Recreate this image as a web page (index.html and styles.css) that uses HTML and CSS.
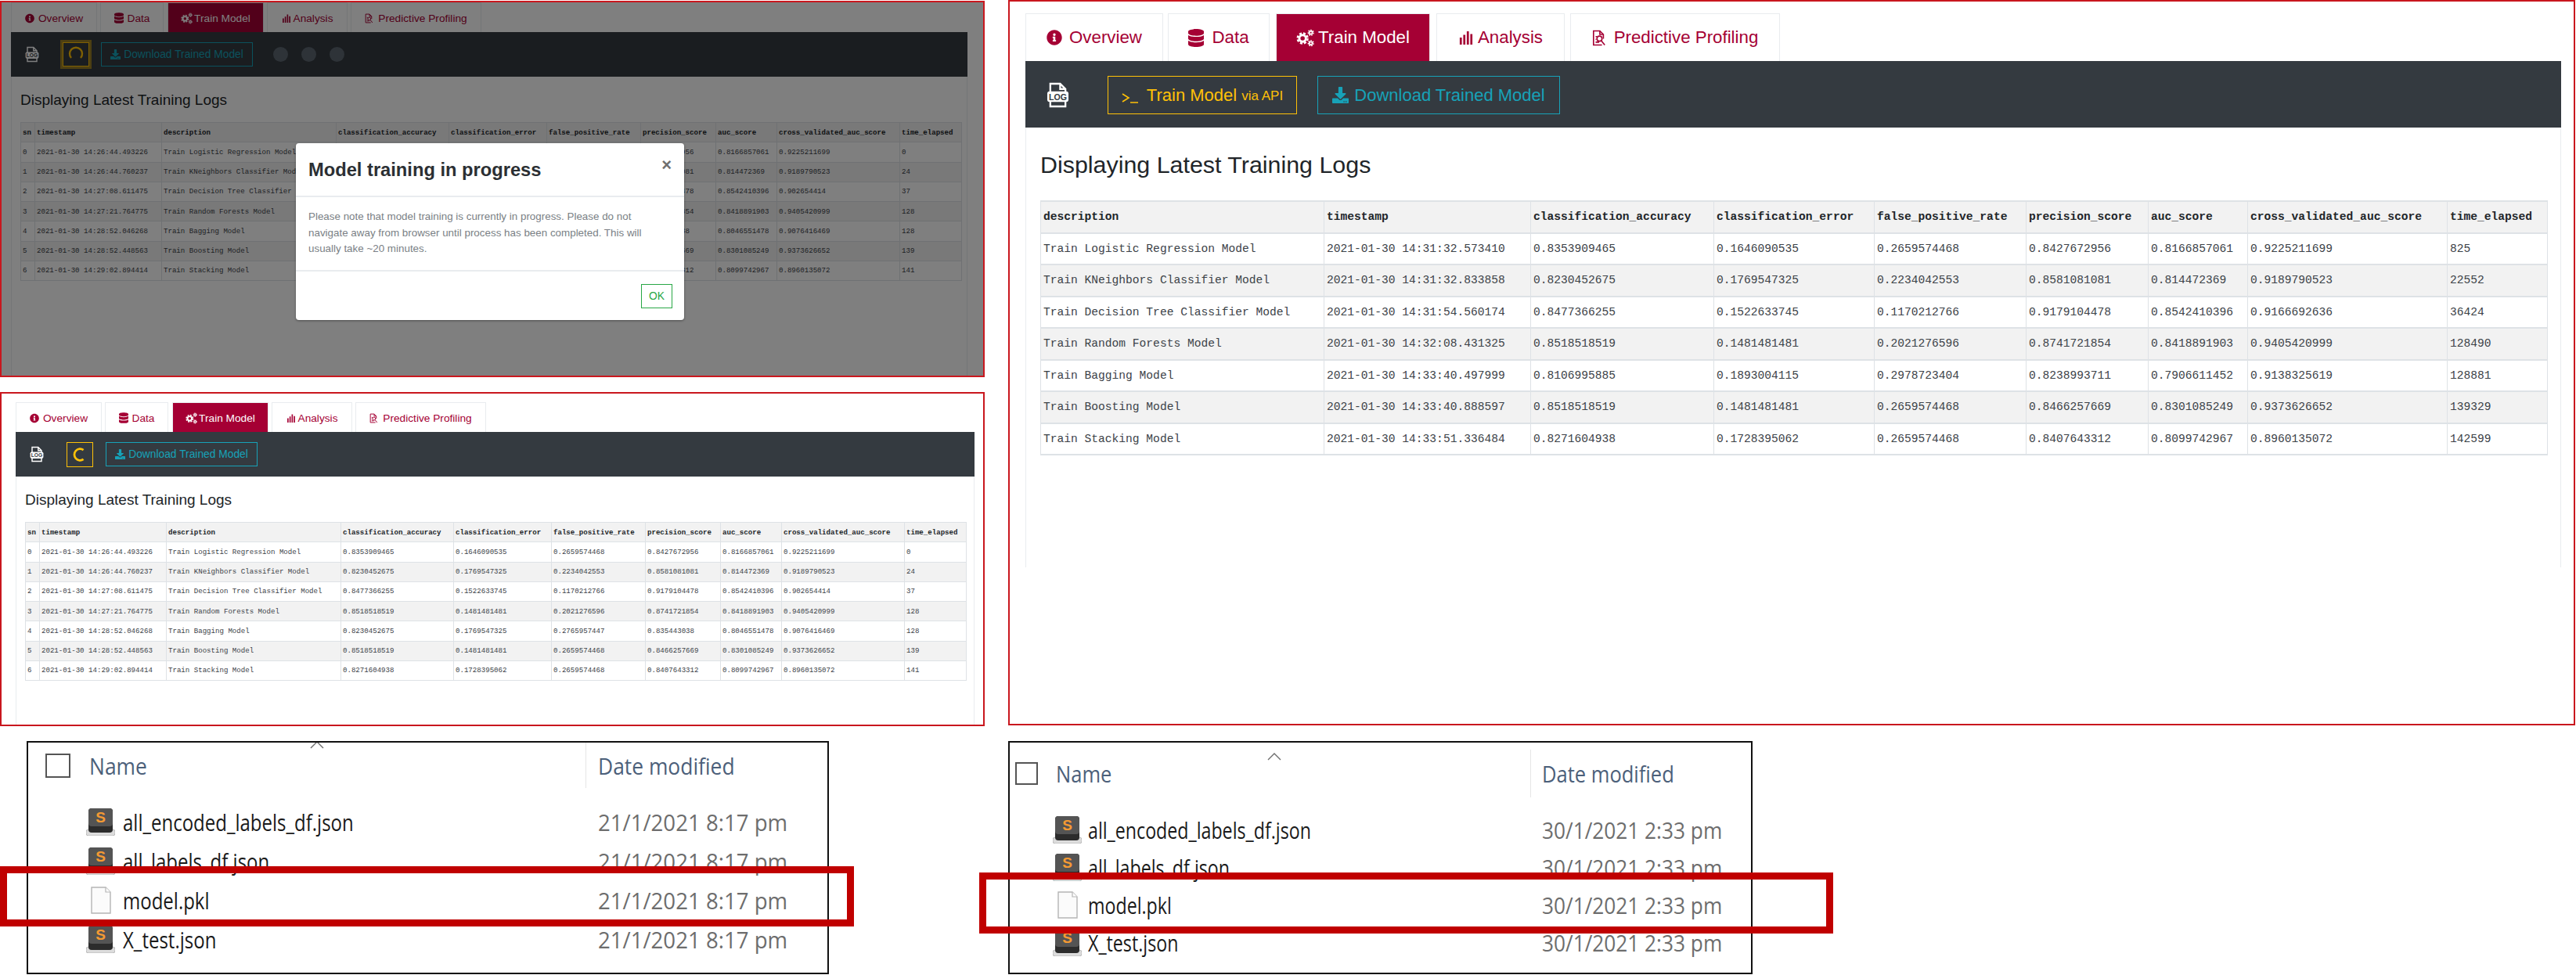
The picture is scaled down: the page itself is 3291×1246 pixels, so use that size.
FILE: index.html
```html
<!DOCTYPE html>
<html lang="en">
<head>
<meta charset="utf-8">
<title>Train Model comparison</title>
<link rel="stylesheet" href="styles.css">
</head>
<body>
<svg class="defs" aria-hidden="true">
  <symbol id="i-info" viewBox="0 0 512 512"><path d="M256 8C119.043 8 8 119.083 8 256c0 136.997 111.043 248 248 248s248-111.003 248-248C504 119.083 392.957 8 256 8zm0 110c23.196 0 42 18.804 42 42s-18.804 42-42 42-42-18.804-42-42 18.804-42 42-42zm56 254c0 6.627-5.373 12-12 12h-88c-6.627 0-12-5.373-12-12v-24c0-6.627 5.373-12 12-12h12v-64h-12c-6.627 0-12-5.373-12-12v-24c0-6.627 5.373-12 12-12h64c6.627 0 12 5.373 12 12v100h12c6.627 0 12 5.373 12 12v24z"/></symbol>
  <symbol id="i-db" viewBox="0 0 448 512"><path d="M448 73.143v45.714C448 159.143 347.667 192 224 192S0 159.143 0 118.857V73.143C0 32.857 100.333 0 224 0s224 32.857 224 73.143zM448 176v102.857C448 319.143 347.667 352 224 352S0 319.143 0 278.857V176c48.125 33.143 136.208 48.572 224 48.572S399.874 209.143 448 176zm0 160v102.857C448 479.143 347.667 512 224 512S0 479.143 0 438.857V336c48.125 33.143 136.208 48.572 224 48.572S399.874 369.143 448 336z"/></symbol>
  <symbol id="i-cogs" viewBox="0 0 24 24"><g fill="none" stroke="currentColor"><circle cx="8.5" cy="12.5" r="4.4" stroke-width="3"/><circle cx="8.5" cy="12.5" r="6.8" stroke-width="2.4" stroke-dasharray="3.2 2.15"/><circle cx="19.5" cy="5" r="2" stroke-width="1.8"/><circle cx="19.5" cy="5" r="3.5" stroke-width="1.5" stroke-dasharray="1.8 1.3"/><circle cx="19.5" cy="19" r="2" stroke-width="1.8"/><circle cx="19.5" cy="19" r="3.5" stroke-width="1.5" stroke-dasharray="1.8 1.3"/></g></symbol>
  <symbol id="i-bars" viewBox="0 0 20 20"><path d="M1 10h3v10H1zM6 6h3v14H6zM11 1h3v19h-3zM16 5h3v15h-3z"/></symbol>
  <symbol id="i-filesearch" viewBox="0 0 20 24"><g fill="none" stroke="currentColor" stroke-width="1.8"><path d="M14 22H2V2h9l5 5v6"/><path d="M11 2v5h5"/><circle cx="10.5" cy="13" r="3.6"/><path d="M13 16l5 6M5 10h2M5 14h1M5 18h5"/></g></symbol>
  <symbol id="i-download" viewBox="0 0 512 512"><path d="M216 0h80c13.3 0 24 10.7 24 24v168h87.7c17.8 0 26.7 21.5 14.1 34.1L269.7 378.3c-7.5 7.5-19.8 7.5-27.3 0L90.1 226.1c-12.6-12.6-3.7-34.1 14.1-34.1H192V24c0-13.3 10.7-24 24-24zm296 376v112c0 13.3-10.7 24-24 24H24c-13.3 0-24-10.7-24-24V376c0-13.3 10.7-24 24-24h146.7l49 49c20.1 20.1 52.5 20.1 72.6 0l49-49H488c13.3 0 24 10.7 24 24zm-124 88c0-11-9-20-20-20s-20 9-20 20 9 20 20 20 20-9 20-20zm64 0c0-11-9-20-20-20s-20 9-20 20 9 20 20 20 20-9 20-20z"/></symbol>
  <symbol id="i-log" viewBox="0 0 30 34"><path d="M5 13V2h13l7 7v4M25 25v7H5v-7M18 2v7h7" fill="none" stroke="currentColor" stroke-width="2.4"/><rect x="1" y="12" width="28" height="14" rx="3" fill="currentColor"/><text x="15" y="23.5" text-anchor="middle" class="log-label">LOG</text></symbol>
  <symbol id="i-sublime" viewBox="0 0 37 35"><rect x="0" y="27" width="37" height="8" rx="3" fill="#dcdcdc" stroke="#b8b8b8"/><rect x="3" y="0" width="31" height="31" rx="4" fill="#2c2c2c"/><rect x="3" y="0" width="31" height="23" rx="4" fill="#545454"/><text x="18.5" y="18" text-anchor="middle" class="sublime-label">S</text></symbol>
  <symbol id="i-page" viewBox="0 0 26 35"><path d="M1 1h18l6 6v27H1z" fill="#fbfbfb" stroke="#b5b5b5" stroke-width="1.4"/><path d="M19 1v6h6" fill="#fff" stroke="#b5b5b5" stroke-width="1.2"/></symbol>
</svg>

<main class="canvas">

  <section class="panel panel--a">
    <div class="card">
      <nav class="tabs tabs--s">
        <a class="tab"><svg class="ic ic--info"><use href="#i-info"/></svg>Overview</a>
        <a class="tab"><svg class="ic ic--db"><use href="#i-db"/></svg>Data</a>
        <a class="tab tab--on"><svg class="ic ic--cogs"><use href="#i-cogs"/></svg>Train Model</a>
        <a class="tab"><svg class="ic ic--bars"><use href="#i-bars"/></svg>Analysis</a>
        <a class="tab"><svg class="ic ic--file"><use href="#i-filesearch"/></svg>Predictive Profiling</a>
      </nav>
      <div class="body">
        <div class="bar bar--a">
          <svg class="log log--s"><use href="#i-log"/></svg>
          <span class="btn-y btn-y--a"><svg class="arc" viewBox="0 0 24 24"><path d="M6 16A8 8 0 1 1 18 16" fill="none" stroke="currentColor" stroke-width="2.4"/></svg></span>
          <span class="btn-t btn-t--s"><svg class="ic-dl"><use href="#i-download"/></svg>Download Trained Model</span>
          <span class="dots"><i></i><i></i><i></i></span>
        </div>
        <h2 class="title title--s">Displaying Latest Training Logs</h2>
        <table class="grid grid--s">
          <colgroup><col><col><col><col><col><col><col><col><col><col></colgroup>
          <thead><tr><th>sn</th><th>timestamp</th><th>description</th><th>classification_accuracy</th><th>classification_error</th><th>false_positive_rate</th><th>precision_score</th><th>auc_score</th><th>cross_validated_auc_score</th><th>time_elapsed</th></tr></thead>
          <tbody>
            <tr><td>0</td><td>2021-01-30 14:26:44.493226</td><td>Train Logistic Regression Model</td><td>0.8353909465</td><td>0.1646090535</td><td>0.2659574468</td><td>0.8427672956</td><td>0.8166857061</td><td>0.9225211699</td><td>0</td></tr>
            <tr><td>1</td><td>2021-01-30 14:26:44.760237</td><td>Train KNeighbors Classifier Model</td><td>0.8230452675</td><td>0.1769547325</td><td>0.2234042553</td><td>0.8581081081</td><td>0.814472369</td><td>0.9189790523</td><td>24</td></tr>
            <tr><td>2</td><td>2021-01-30 14:27:08.611475</td><td>Train Decision Tree Classifier Model</td><td>0.8477366255</td><td>0.1522633745</td><td>0.1170212766</td><td>0.9179104478</td><td>0.8542410396</td><td>0.902654414</td><td>37</td></tr>
            <tr><td>3</td><td>2021-01-30 14:27:21.764775</td><td>Train Random Forests Model</td><td>0.8518518519</td><td>0.1481481481</td><td>0.2021276596</td><td>0.8741721854</td><td>0.8418891903</td><td>0.9405420999</td><td>128</td></tr>
            <tr><td>4</td><td>2021-01-30 14:28:52.046268</td><td>Train Bagging Model</td><td>0.8230452675</td><td>0.1769547325</td><td>0.2765957447</td><td>0.835443038</td><td>0.8046551478</td><td>0.9076416469</td><td>128</td></tr>
            <tr><td>5</td><td>2021-01-30 14:28:52.448563</td><td>Train Boosting Model</td><td>0.8518518519</td><td>0.1481481481</td><td>0.2659574468</td><td>0.8466257669</td><td>0.8301085249</td><td>0.9373626652</td><td>139</td></tr>
            <tr><td>6</td><td>2021-01-30 14:29:02.894414</td><td>Train Stacking Model</td><td>0.8271604938</td><td>0.1728395062</td><td>0.2659574468</td><td>0.8407643312</td><td>0.8099742967</td><td>0.8960135072</td><td>141</td></tr>
          </tbody>
        </table>
      </div>
    </div>
    <div class="scrim"></div>
    <div class="modal">
      <header class="modal-head"><h3>Model training in progress</h3><span class="modal-x">×</span></header>
      <p class="modal-body">Please note that model training is currently in progress. Please do not navigate away from browser until process has been completed. This will usually take ~20 minutes.</p>
      <footer class="modal-foot"><span class="btn-ok">OK</span></footer>
    </div>
  </section>

  <section class="panel panel--b">
    <div class="card">
      <nav class="tabs tabs--s">
        <a class="tab"><svg class="ic ic--info"><use href="#i-info"/></svg>Overview</a>
        <a class="tab"><svg class="ic ic--db"><use href="#i-db"/></svg>Data</a>
        <a class="tab tab--on"><svg class="ic ic--cogs"><use href="#i-cogs"/></svg>Train Model</a>
        <a class="tab"><svg class="ic ic--bars"><use href="#i-bars"/></svg>Analysis</a>
        <a class="tab"><svg class="ic ic--file"><use href="#i-filesearch"/></svg>Predictive Profiling</a>
      </nav>
      <div class="body">
        <div class="bar bar--b">
          <svg class="log log--s"><use href="#i-log"/></svg>
          <span class="btn-y btn-y--b"><svg class="arc" viewBox="0 0 24 24"><path d="M17 5.5A8 8 0 1 0 17 18.5" fill="none" stroke="currentColor" stroke-width="3"/></svg></span>
          <span class="btn-t btn-t--s"><svg class="ic-dl"><use href="#i-download"/></svg>Download Trained Model</span>
        </div>
        <h2 class="title title--s">Displaying Latest Training Logs</h2>
        <table class="grid grid--s">
          <colgroup><col><col><col><col><col><col><col><col><col><col></colgroup>
          <thead><tr><th>sn</th><th>timestamp</th><th>description</th><th>classification_accuracy</th><th>classification_error</th><th>false_positive_rate</th><th>precision_score</th><th>auc_score</th><th>cross_validated_auc_score</th><th>time_elapsed</th></tr></thead>
          <tbody>
            <tr><td>0</td><td>2021-01-30 14:26:44.493226</td><td>Train Logistic Regression Model</td><td>0.8353909465</td><td>0.1646090535</td><td>0.2659574468</td><td>0.8427672956</td><td>0.8166857061</td><td>0.9225211699</td><td>0</td></tr>
            <tr><td>1</td><td>2021-01-30 14:26:44.760237</td><td>Train KNeighbors Classifier Model</td><td>0.8230452675</td><td>0.1769547325</td><td>0.2234042553</td><td>0.8581081081</td><td>0.814472369</td><td>0.9189790523</td><td>24</td></tr>
            <tr><td>2</td><td>2021-01-30 14:27:08.611475</td><td>Train Decision Tree Classifier Model</td><td>0.8477366255</td><td>0.1522633745</td><td>0.1170212766</td><td>0.9179104478</td><td>0.8542410396</td><td>0.902654414</td><td>37</td></tr>
            <tr><td>3</td><td>2021-01-30 14:27:21.764775</td><td>Train Random Forests Model</td><td>0.8518518519</td><td>0.1481481481</td><td>0.2021276596</td><td>0.8741721854</td><td>0.8418891903</td><td>0.9405420999</td><td>128</td></tr>
            <tr><td>4</td><td>2021-01-30 14:28:52.046268</td><td>Train Bagging Model</td><td>0.8230452675</td><td>0.1769547325</td><td>0.2765957447</td><td>0.835443038</td><td>0.8046551478</td><td>0.9076416469</td><td>128</td></tr>
            <tr><td>5</td><td>2021-01-30 14:28:52.448563</td><td>Train Boosting Model</td><td>0.8518518519</td><td>0.1481481481</td><td>0.2659574468</td><td>0.8466257669</td><td>0.8301085249</td><td>0.9373626652</td><td>139</td></tr>
            <tr><td>6</td><td>2021-01-30 14:29:02.894414</td><td>Train Stacking Model</td><td>0.8271604938</td><td>0.1728395062</td><td>0.2659574468</td><td>0.8407643312</td><td>0.8099742967</td><td>0.8960135072</td><td>141</td></tr>
          </tbody>
        </table>
      </div>
    </div>
  </section>

  <section class="panel panel--c">
    <div class="card">
      <nav class="tabs tabs--l">
        <a class="tab"><svg class="ic ic--info"><use href="#i-info"/></svg>Overview</a>
        <a class="tab"><svg class="ic ic--db"><use href="#i-db"/></svg>Data</a>
        <a class="tab tab--on"><svg class="ic ic--cogs"><use href="#i-cogs"/></svg>Train Model</a>
        <a class="tab"><svg class="ic ic--bars"><use href="#i-bars"/></svg>Analysis</a>
        <a class="tab"><svg class="ic ic--file"><use href="#i-filesearch"/></svg>Predictive Profiling</a>
      </nav>
      <div class="body">
        <div class="bar bar--c">
          <svg class="log log--l"><use href="#i-log"/></svg>
          <span class="btn-y btn-y--c"><svg class="prompt" viewBox="0 0 22 14"><path d="M1 2l8 5-8 5M11 13h10" fill="none" stroke="currentColor" stroke-width="1.6"/></svg>Train Model <small>via API</small></span>
          <span class="btn-t btn-t--l"><svg class="ic-dl"><use href="#i-download"/></svg>Download Trained Model</span>
        </div>
        <h2 class="title title--l">Displaying Latest Training Logs</h2>
        <table class="grid grid--l">
          <colgroup><col><col><col><col><col><col><col><col><col></colgroup>
          <thead><tr><th>description</th><th>timestamp</th><th>classification_accuracy</th><th>classification_error</th><th>false_positive_rate</th><th>precision_score</th><th>auc_score</th><th>cross_validated_auc_score</th><th>time_elapsed</th></tr></thead>
          <tbody>
            <tr><td>Train Logistic Regression Model</td><td>2021-01-30 14:31:32.573410</td><td>0.8353909465</td><td>0.1646090535</td><td>0.2659574468</td><td>0.8427672956</td><td>0.8166857061</td><td>0.9225211699</td><td>825</td></tr>
            <tr><td>Train KNeighbors Classifier Model</td><td>2021-01-30 14:31:32.833858</td><td>0.8230452675</td><td>0.1769547325</td><td>0.2234042553</td><td>0.8581081081</td><td>0.814472369</td><td>0.9189790523</td><td>22552</td></tr>
            <tr><td>Train Decision Tree Classifier Model</td><td>2021-01-30 14:31:54.560174</td><td>0.8477366255</td><td>0.1522633745</td><td>0.1170212766</td><td>0.9179104478</td><td>0.8542410396</td><td>0.9166692636</td><td>36424</td></tr>
            <tr><td>Train Random Forests Model</td><td>2021-01-30 14:32:08.431325</td><td>0.8518518519</td><td>0.1481481481</td><td>0.2021276596</td><td>0.8741721854</td><td>0.8418891903</td><td>0.9405420999</td><td>128490</td></tr>
            <tr><td>Train Bagging Model</td><td>2021-01-30 14:33:40.497999</td><td>0.8106995885</td><td>0.1893004115</td><td>0.2978723404</td><td>0.8238993711</td><td>0.7906611452</td><td>0.9138325619</td><td>128881</td></tr>
            <tr><td>Train Boosting Model</td><td>2021-01-30 14:33:40.888597</td><td>0.8518518519</td><td>0.1481481481</td><td>0.2659574468</td><td>0.8466257669</td><td>0.8301085249</td><td>0.9373626652</td><td>139329</td></tr>
            <tr><td>Train Stacking Model</td><td>2021-01-30 14:33:51.336484</td><td>0.8271604938</td><td>0.1728395062</td><td>0.2659574468</td><td>0.8407643312</td><td>0.8099742967</td><td>0.8960135072</td><td>142599</td></tr>
          </tbody>
        </table>
      </div>
    </div>
  </section>

  <section class="explorer explorer--d">
    <svg class="caret" viewBox="0 0 18 10"><path d="M1 9l8-8 8 8" fill="none" stroke="#6d6d6d" stroke-width="1.4"/></svg>
    <header class="ex-head">
      <span class="ex-check"></span>
      <span class="ex-name"><span class="ex-label">Name</span></span>
      <span class="ex-date"><span class="ex-label">Date modified</span></span>
    </header>
    <div class="ex-row"><svg class="ex-icon"><use href="#i-sublime"/></svg><span class="ex-file"><span class="ex-narrow">all_encoded_labels_df.json</span></span><time class="ex-time">21/1/2021 8:17 pm</time></div>
    <div class="ex-row"><svg class="ex-icon"><use href="#i-sublime"/></svg><span class="ex-file"><span class="ex-narrow">all_labels_df.json</span></span><time class="ex-time">21/1/2021 8:17 pm</time></div>
    <div class="ex-row"><span class="ex-iconbox"><svg class="ex-page"><use href="#i-page"/></svg></span><span class="ex-file"><span class="ex-narrow">model.pkl</span></span><time class="ex-time">21/1/2021 8:17 pm</time></div>
    <div class="ex-row"><svg class="ex-icon"><use href="#i-sublime"/></svg><span class="ex-file"><span class="ex-narrow">X_test.json</span></span><time class="ex-time">21/1/2021 8:17 pm</time></div>
  </section>
  <div class="callout callout--d"></div>

  <section class="explorer explorer--e">
    <svg class="caret" viewBox="0 0 18 10"><path d="M1 9l8-8 8 8" fill="none" stroke="#6d6d6d" stroke-width="1.4"/></svg>
    <header class="ex-head">
      <span class="ex-check"></span>
      <span class="ex-name"><span class="ex-label">Name</span></span>
      <span class="ex-date"><span class="ex-label">Date modified</span></span>
    </header>
    <div class="ex-row"><svg class="ex-icon"><use href="#i-sublime"/></svg><span class="ex-file"><span class="ex-narrow">all_encoded_labels_df.json</span></span><time class="ex-time">30/1/2021 2:33 pm</time></div>
    <div class="ex-row"><svg class="ex-icon"><use href="#i-sublime"/></svg><span class="ex-file"><span class="ex-narrow">all_labels_df.json</span></span><time class="ex-time">30/1/2021 2:33 pm</time></div>
    <div class="ex-row"><span class="ex-iconbox"><svg class="ex-page"><use href="#i-page"/></svg></span><span class="ex-file"><span class="ex-narrow">model.pkl</span></span><time class="ex-time">30/1/2021 2:33 pm</time></div>
    <div class="ex-row"><svg class="ex-icon"><use href="#i-sublime"/></svg><span class="ex-file"><span class="ex-narrow">X_test.json</span></span><time class="ex-time">30/1/2021 2:33 pm</time></div>
  </section>
  <div class="callout callout--e"></div>

</main>
</body>
</html>
```
FILE: styles.css
```css
* { box-sizing: border-box; }
html, body { margin: 0; background: #fff; }
body { font-family: "Liberation Sans", Arial, sans-serif; color: #212529; }
.defs { display: none; }
.log-label { font: bold 11px "Liberation Sans", sans-serif; fill: #343a40; }
.sublime-label { font: bold 19px "Liberation Sans", sans-serif; fill: #f49a33; }

.canvas { position: relative; width: 3291px; height: 1246px; overflow: hidden; }

/* Screenshots placed on the free canvas */
.panel { position: absolute; display: flex; border: 2px solid #c9171e; background: #fff; }
.panel--a { left: 0; top: 1px; width: 1258px; height: 481px; padding: 0 20px 0 12px; }
.panel--b { left: 0; top: 501px; width: 1258px; height: 427px; padding: 11px 11px 0 18px; }
.panel--c { left: 1288px; top: 0; width: 2002px; height: 927px; padding: 15px 16px 0 20px; align-items: flex-start; }

.card { flex: 1; display: flex; flex-direction: column; min-width: 0; align-self: stretch; }
.panel--c .card { align-self: flex-start; height: 708px; }
.body { flex: 1; border: solid #e9ecef; border-width: 0 1px; }

/* Tabs */
.tabs { display: flex; }
.tab { display: flex; align-items: center; justify-content: center; border: 1px solid #e9ecef; border-bottom: 0; color: #a50034; white-space: nowrap; }
.tab--on { background: #a50034; color: #fff; }
.ic { fill: currentColor; color: inherit; flex: none; }

.tabs--s { height: 38px; font-size: 13.7px; }
.tabs--s .tab { padding-top: 1px; }
.tabs--s .tab:nth-child(1) { width: 110px; }
.tabs--s .tab:nth-child(2) { width: 81px; margin-left: 4px; }
.tabs--s .tab:nth-child(3) { width: 123px; margin-left: 5px; }
.tabs--s .tab:nth-child(4) { width: 103px; margin-left: 4px; }
.tabs--s .tab:nth-child(5) { width: 167px; margin-left: 4px; }
.tabs--s .ic--info { width: 12px; height: 13px; margin-right: 5px; }
.tabs--s .ic--db { width: 12px; height: 14px; margin-right: 5px; }
.tabs--s .ic--cogs { width: 15px; height: 15px; margin-right: 2px; }
.tabs--s .ic--bars { width: 12px; height: 11px; margin-right: 3px; }
.tabs--s .ic--file { width: 11px; height: 13px; margin-right: 6px; }

.tabs--l { height: 61px; font-size: 22.3px; }
.tabs--l .tab { padding-top: 0; }
.tabs--l .tab:nth-child(1) { width: 176px; }
.tabs--l .tab:nth-child(2) { width: 130px; margin-left: 6px; }
.tabs--l .tab:nth-child(3) { width: 197px; margin-left: 8px; }
.tabs--l .tab:nth-child(4) { width: 164px; margin-left: 8px; }
.tabs--l .tab:nth-child(5) { width: 268px; margin-left: 7px; }
.tabs--l .ic--info { width: 20px; height: 20px; margin-right: 9px; }
.tabs--l .ic--db { width: 20px; height: 23px; margin-right: 10px; }
.tabs--l .ic--cogs { width: 23px; height: 23px; margin-right: 5px; }
.tabs--l .ic--bars { width: 20px; height: 18px; margin-right: 5px; }
.tabs--l .ic--file { width: 18px; height: 27px; margin-right: 10px; }

/* Toolbar */
.bar { display: flex; align-items: center; background: #343a40; margin: 0 -1px; }
.bar--a, .bar--b { height: 57px; padding-left: 18px; }
.bar--c { height: 85px; padding: 2px 0 0 27px; }
.log { color: #fff; flex: none; }
.log--s { width: 18px; height: 21px; }
.log--l { width: 29px; height: 33px; }

.btn-y, .btn-t { display: flex; align-items: center; justify-content: center; white-space: nowrap; flex: none; }
.btn-y { color: #ffc107; border: 1px solid #ffc107; }
.btn-t { color: #17a2b8; border: 1px solid #17a2b8; }
.arc { display: block; }
.btn-y--a { width: 40px; height: 37px; margin-left: 27px; border: 3px solid rgba(255, 193, 7, .5); box-shadow: inset 0 0 0 1px #ffc107; }
.btn-y--a .arc { width: 24px; height: 24px; }
.btn-y--b { width: 34px; height: 32px; margin-left: 29px; }
.btn-y--b .arc { width: 22px; height: 22px; }
.btn-y--c { width: 242px; height: 49px; margin-left: 49px; font-size: 22px; }
.btn-y--c small { font-size: 17px; margin-left: 6px; padding-top: 3px; }
.btn-y--c .prompt { width: 22px; height: 14px; margin: 6px 10px 0 0; }

.btn-t--s { width: 194px; height: 31px; font-size: 13.8px; }
.bar--a .btn-t--s { margin-left: 12px; }
.bar--b .btn-t--s { margin-left: 16px; }
.btn-t--l { width: 310px; height: 49px; margin-left: 26px; font-size: 22px; }
.ic-dl { fill: currentColor; flex: none; }
.btn-t--s .ic-dl { width: 13px; height: 13px; margin-right: 4px; }
.btn-t--l .ic-dl { width: 21px; height: 21px; margin-right: 7px; }

.dots { display: flex; gap: 17px; margin-left: 26px; }
.dots i { display: block; width: 19px; height: 19px; border-radius: 50%; background: #5c6670; }

/* Heading */
.title { margin: 0; font-weight: 400; color: #212529; }
.title--s { font-size: 19px; line-height: 24px; margin: 18px 0 16px 11px; }
.title--l { font-size: 30.4px; line-height: 38px; margin: 28px 0 27px 18px; }

/* Logs table */
.grid { border-collapse: collapse; table-layout: fixed; font-family: "Liberation Mono", monospace; color: #3c4248; }
.grid th, .grid td { border: 1px solid #dee2e6; text-align: left; white-space: nowrap; overflow: hidden; }
.grid th { background: #f2f2f2; color: #212529; font-weight: 700; }
.grid tbody tr:nth-child(even) td { background: #f2f2f2; }

.grid--s { width: 1202px; margin-left: 11px; font-size: 9.1px; }
.grid--s th, .grid--s td { height: 25.25px; padding: 0 2px; }
.grid--s col:nth-child(1) { width: 18px; }
.grid--s col:nth-child(2) { width: 162px; }
.grid--s col:nth-child(3) { width: 223px; }
.grid--s col:nth-child(4) { width: 144px; }
.grid--s col:nth-child(5) { width: 125px; }
.grid--s col:nth-child(6) { width: 120px; }
.grid--s col:nth-child(7) { width: 96px; }
.grid--s col:nth-child(8) { width: 78px; }
.grid--s col:nth-child(9) { width: 157px; }
.grid--s col:nth-child(10) { width: 79px; }

.grid--l { width: 1925px; margin-left: 18px; font-size: 14.6px; }
.grid--l th, .grid--l td { height: 40.5px; padding: 0 3px; border-width: 2px 1px; }
.grid--l col:nth-child(1) { width: 362px; }
.grid--l col:nth-child(2) { width: 264px; }
.grid--l col:nth-child(3) { width: 234px; }
.grid--l col:nth-child(4) { width: 205px; }
.grid--l col:nth-child(5) { width: 194px; }
.grid--l col:nth-child(6) { width: 156px; }
.grid--l col:nth-child(7) { width: 127px; }
.grid--l col:nth-child(8) { width: 255px; }
.grid--l col:nth-child(9) { width: 128px; }

/* Modal over panel A */
.scrim { position: absolute; inset: 0; background: rgba(0, 0, 0, .5); }
.modal { position: absolute; left: 376px; top: 180px; width: 496px; height: 226px; display: flex; flex-direction: column; background: #fff; border-radius: 4px; box-shadow: 0 1px 3px rgba(0,0,0,.4); }
.modal-head { height: 69px; display: flex; justify-content: space-between; padding: 0 16px; border-bottom: 2px solid #e9ecef; }
.modal-head h3 { margin: 0; font-size: 23.7px; line-height: 68px; font-weight: 700; color: #2b2f33; }
.modal-x { font-size: 22px; font-weight: 700; line-height: 56px; color: #6f6f6f; margin-right: 0; }
.modal-body { flex: none; height: 95px; margin: 0; padding: 15px 25px 0 16px; font-size: 13.4px; line-height: 20.5px; color: #7a7f85; border-bottom: 2px solid #e9ecef; }
.modal-foot { flex: 1; display: flex; justify-content: flex-end; align-items: center; padding: 0 15px 0 0; }
.btn-ok { width: 40px; height: 31px; display: flex; align-items: center; justify-content: center; border: 1px solid #28a745; color: #28a745; font-size: 13.8px; }

/* Explorer crops: the source image was squeezed sideways, so the labels are too */
.explorer { position: absolute; top: 947px; height: 298px; border: 2px solid #111; background: #fff; overflow: hidden; font-family: "Open Sans", sans-serif; }
.explorer--d { left: 34px; width: 1025px; }
.explorer--e { left: 1288px; width: 951px; }
.caret { position: absolute; width: 18px; height: 10px; }
.explorer--d .caret { left: 360px; top: -2px; }
.explorer--e .caret { left: 329px; top: 13px; }

.ex-head { display: flex; align-items: center; }
.ex-check { flex: none; border: 2px solid #555; }
.ex-name, .ex-date { color: #4c607a; }
.ex-date { align-self: stretch; display: flex; align-items: center; border-left: 1px solid #e5e5e5; }
.ex-label, .ex-narrow { display: inline-block; transform-origin: left center; white-space: nowrap; }
.ex-label { transform: scaleX(.88); }
.ex-narrow { transform: scaleX(.8); }
.ex-row { display: flex; align-items: center; }
.ex-icon { flex: none; width: 37px; height: 35px; margin-left: -1px; margin-right: -1px; }
.ex-iconbox { flex: none; width: 35px; display: flex; justify-content: center; }
.ex-page { width: 26px; height: 35px; display: block; }
.ex-file { color: #1a1a1a; white-space: nowrap; flex: none; }
.ex-time { color: #6d6d6d; white-space: nowrap; display: inline-block; transform-origin: left center; }

.explorer--d .ex-head { height: 58px; padding-left: 22px; margin-bottom: 18px; font-size: 30px; }
.explorer--d .ex-check { width: 32px; height: 31px; margin-right: 24px; }
.explorer--d .ex-name { width: 634px; }
.explorer--d .ex-date { padding-left: 15px; }
.explorer--d .ex-row { height: 50px; padding-left: 75px; font-size: 30px; }
.explorer--d .ex-file { width: 618px; padding-left: 11px; }
.explorer--d .ex-time { transform: scaleX(.92); }

.explorer--e .ex-head { height: 70px; padding: 9px 0 0 7px; margin-bottom: 17px; font-size: 29px; }
.explorer--e .ex-check { width: 29px; height: 29px; margin-right: 23px; }
.explorer--e .ex-name { width: 606px; }
.explorer--e .ex-date { padding-left: 14px; }
.explorer--e .ex-row { height: 48px; padding-left: 56px; font-size: 29px; }
.explorer--e .ex-file { width: 589px; padding-left: 9px; }
.explorer--e .ex-time { transform: scaleX(.905); }

.callout { position: absolute; border: 9px solid #c00000; }
.callout--d { left: 0; top: 1107px; width: 1091px; height: 77px; }
.callout--e { left: 1251px; top: 1115px; width: 1091px; height: 78px; }
```
